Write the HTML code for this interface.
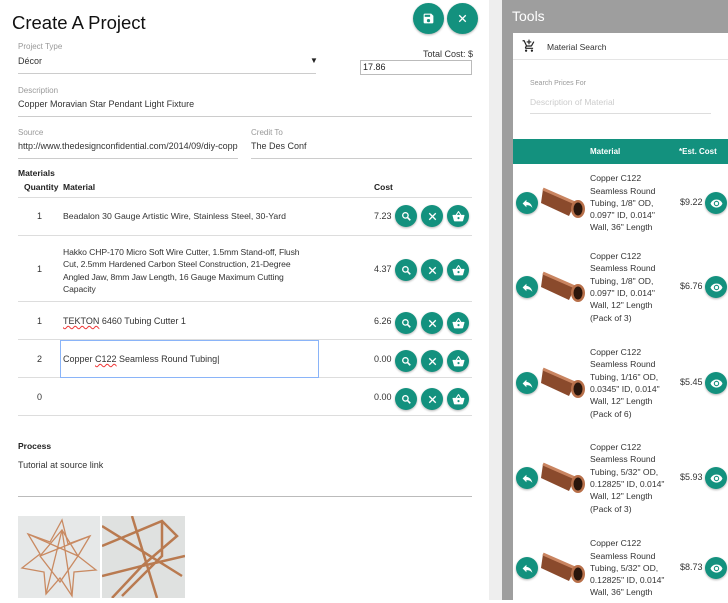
<!DOCTYPE html>
<html><head><meta charset="utf-8"><style>
*{margin:0;padding:0;box-sizing:border-box}
body{width:728px;height:600px;overflow:hidden;background:#fff;font-family:"Liberation Sans",sans-serif;color:#222;position:relative}
.a{position:absolute;white-space:nowrap}
.lbl{font-size:8px;color:#999}
.val{font-size:9px;color:#333}
.ln{position:absolute;height:1px;background:#ccc}
.c{position:absolute;width:22px;height:22px;border-radius:50%;background:#13917e;box-shadow:0 1px 2px rgba(0,0,0,.3);display:flex;align-items:center;justify-content:center}
.c svg{width:13px;height:13px}
.tube{position:absolute;width:46px;height:34px}
.rt{position:absolute;left:590px;font-size:8.6px;line-height:12.3px;color:#333;width:90px}
.pr{position:absolute;left:680px;font-size:9px;color:#333}
</style></head><body>
<!-- left -->
<div class="a" style="left:12px;top:12px;font-size:18.5px;color:#111">Create A Project</div>
<div class="c" style="left:413px;top:3px;width:31px;height:31px"><svg viewBox="0 0 24 24"><path fill="#fff" d="M17 3H5a2 2 0 0 0-2 2v14a2 2 0 0 0 2 2h14a2 2 0 0 0 2-2V7l-4-4zm-5 16a3 3 0 1 1 0-6 3 3 0 0 1 0 6zm3-10H5V5h10v4z"/></svg></div>
<div class="c" style="left:447px;top:3px;width:31px;height:31px"><svg viewBox="0 0 24 24"><path stroke="#fff" stroke-width="2.4" d="M6 6l12 12M18 6L6 18"/></svg></div>
<div class="a lbl" style="left:18px;top:42px">Project Type</div>
<div class="a val" style="left:18px;top:56px">Décor</div>
<div class="a" style="left:310px;top:56px;font-size:8px">▼</div>
<div class="ln" style="left:18px;top:73px;width:298px"></div>
<div class="a val" style="left:423px;top:49px">Total Cost: $</div>
<div style="position:absolute;left:360px;top:60px;width:112px;height:15px;border:1px solid #bbb;font-size:9px;padding:1px 2px">17.86</div>
<div class="a lbl" style="left:18px;top:86px">Description</div>
<div class="a val" style="left:18px;top:99px">Copper Moravian Star Pendant Light Fixture</div>
<div class="ln" style="left:18px;top:116px;width:454px"></div>
<div class="a lbl" style="left:18px;top:128px">Source</div>
<div class="a val" style="left:18px;top:141px;width:220px;overflow:hidden">http://www.thedesignconfidential.com/2014/09/diy-copper</div>
<div class="ln" style="left:18px;top:158px;width:220px"></div>
<div class="a lbl" style="left:251px;top:128px">Credit To</div>
<div class="a val" style="left:251px;top:141px">The Des Conf</div>
<div class="ln" style="left:251px;top:158px;width:221px"></div>
<div class="a" style="left:18px;top:168px;font-size:8.5px;font-weight:bold">Materials</div>
<div class="a" style="left:24px;top:182px;font-size:8.5px;font-weight:bold">Quantity</div>
<div class="a" style="left:63px;top:182px;font-size:8.5px;font-weight:bold">Material</div>
<div class="a" style="left:374px;top:182px;font-size:8.5px;font-weight:bold">Cost</div>
<div class="ln" style="left:18px;top:197px;width:454px;background:#ddd"></div>
<div class="ln" style="left:18px;top:235px;width:454px;background:#ddd"></div>
<div class="ln" style="left:18px;top:301px;width:454px;background:#ddd"></div>
<div class="ln" style="left:18px;top:339px;width:454px;background:#ddd"></div>
<div class="ln" style="left:18px;top:377px;width:454px;background:#ddd"></div>
<div class="ln" style="left:18px;top:415px;width:454px;background:#ddd"></div>
<div class="a val" style="left:37px;top:211px">1</div>
<div class="a val" style="left:63px;top:211px;font-size:8.7px">Beadalon 30 Gauge Artistic Wire, Stainless Steel, 30-Yard</div>
<div class="a val" style="left:37px;top:264px">1</div>
<div class="a val" style="left:63px;top:246px;line-height:12.3px;font-size:8.6px;letter-spacing:-0.1px">Hakko CHP-170 Micro Soft Wire Cutter, 1.5mm Stand-off, Flush<br>Cut, 2.5mm Hardened Carbon Steel Construction, 21-Degree<br>Angled Jaw, 8mm Jaw Length, 16 Gauge Maximum Cutting<br>Capacity</div>
<div class="a val" style="left:37px;top:316px">1</div>
<div class="a val" style="left:63px;top:316px"><span style="text-decoration:underline wavy #e33">TEKTON</span> 6460 Tubing Cutter 1</div>
<div class="a val" style="left:37px;top:354px">2</div>
<div style="position:absolute;left:60px;top:340px;width:259px;height:38px;border:1px solid #8ab4f8"></div>
<div class="a val" style="left:63px;top:354px">Copper <span style="text-decoration:underline wavy #e33">C122</span> Seamless Round Tubing|</div>
<div class="a val" style="left:37px;top:392px">0</div>
<div class="a val" style="left:374px;top:211px">7.23</div>
<div class="a val" style="left:374px;top:264px">4.37</div>
<div class="a val" style="left:374px;top:316px">6.26</div>
<div class="a val" style="left:374px;top:354px">0.00</div>
<div class="a val" style="left:374px;top:392px">0.00</div>
<div id="acts"></div>
<div class="a" style="left:18px;top:441px;font-size:8.5px;font-weight:bold">Process</div>
<div class="a val" style="left:18px;top:460px">Tutorial at source link</div>
<div class="ln" style="left:18px;top:496px;width:454px;background:#bbb"></div>
<div style="position:absolute;left:18px;top:516px;width:82px;height:82px;background:#e6e8e8">
<svg width="82" height="82" viewBox="0 0 82 82"><g stroke="#c98a62" stroke-width="1.3" fill="none"><polygon points="44,4 50,28 72,20 60,40 78,54 56,56 54,80 42,62 28,78 26,56 4,52 22,38 10,18 32,26"/><polygon points="44,14 60,40 42,66 22,40"/><path d="M10,18 L60,40 M72,20 L22,40 M28,78 L44,14 M54,80 L44,14"/></g></svg></div>
<div style="position:absolute;left:102px;top:516px;width:83px;height:82px;background:#dfe1e0">
<svg width="83" height="82" viewBox="0 0 83 82"><g stroke="#b97a50" stroke-width="2.5" fill="none"><path d="M0,30 L60,5 L75,20 L40,50 L0,60 M30,0 L55,82 M60,5 L60,40 L20,80 M0,10 L80,60 M10,82 L40,50 L83,40"/></g></svg></div>
<!-- divider -->
<div style="position:absolute;left:489px;top:0;width:13px;height:600px;background:#eeeeee"></div>
<div style="position:absolute;left:502px;top:0;width:226px;height:600px;background:#9e9e9e"></div>
<div class="a" style="left:512px;top:8px;font-size:14px;color:#fff">Tools</div>
<div style="position:absolute;left:513px;top:33px;width:215px;height:567px;background:#fff"></div>
<svg style="position:absolute;left:522px;top:39px" width="14" height="14" viewBox="0 0 24 24"><path fill="#222" d="M11 9h2V6h3V4h-3V1h-2v3H8v2h3v3zm-4 9a2 2 0 1 0 0 4 2 2 0 0 0 0-4zm10 0a2 2 0 1 0 0 4 2 2 0 0 0 0-4zM7.2 14.8L8.1 13h7.4a2 2 0 0 0 1.8-1l3.9-7-1.8-1-3.9 7H8.5L4.3 2H1v2h2l3.6 7.6L5.2 14A2 2 0 0 0 7 17h12v-2H7.4z"/></svg>
<div class="a" style="left:547px;top:42px;font-size:8.5px;color:#333">Material Search</div>
<div class="ln" style="left:513px;top:59px;width:215px;background:#e5e5e5"></div>
<div class="a" style="left:530px;top:80px;font-size:7px;color:#999">Search Prices For</div>
<div class="a" style="left:530px;top:97px;font-size:8.5px;color:#ccc">Description of Material</div>
<div class="ln" style="left:530px;top:113px;width:181px;background:#ddd"></div>
<div style="position:absolute;left:513px;top:139px;width:215px;height:25px;background:#13917e"></div>
<div class="a" style="left:590px;top:147px;font-size:8px;font-weight:bold;color:#fff">Material</div>
<div class="a" style="left:679px;top:147px;font-size:8px;font-weight:bold;color:#fff">*Est. Cost</div>
<div id="rows"></div>
<script>
var a='';
[213,267,320,358,396].forEach(function(y){
a+='<div class="c" style="left:395px;top:'+(y-8)+'px"><svg viewBox="0 0 24 24"><circle cx="10" cy="10" r="5" stroke="#fff" stroke-width="2.5" fill="none"/><path d="M14 14l5 5" stroke="#fff" stroke-width="3"/></svg></div>';
a+='<div class="c" style="left:421px;top:'+(y-8)+'px"><svg viewBox="0 0 24 24"><path stroke="#fff" stroke-width="2.5" d="M6 6l12 12M18 6L6 18"/></svg></div>';
a+='<div class="c" style="left:447px;top:'+(y-8)+'px"><svg viewBox="0 0 24 24"><path fill="#fff" d="M17.2 9l-4.4-6.6a1 1 0 0 0-1.6 0L6.8 9H2a1 1 0 0 0-1 1.3l2.5 9.3A2 2 0 0 0 5.5 21h13a2 2 0 0 0 2-1.4l2.5-9.3A1 1 0 0 0 22 9h-4.8zM9 9l3-4.4L15 9H9zm3 8a2 2 0 1 1 0-4 2 2 0 0 1 0 4z"/></svg></div>';
});
document.getElementById('acts').innerHTML=a;
var R=[[203,'Copper C122<br>Seamless Round<br>Tubing, 1/8" OD,<br>0.097" ID, 0.014"<br>Wall, 36" Length','$9.22'],
[287,'Copper C122<br>Seamless Round<br>Tubing, 1/8" OD,<br>0.097" ID, 0.014"<br>Wall, 12" Length<br>(Pack of 3)','$6.76'],
[383,'Copper C122<br>Seamless Round<br>Tubing, 1/16" OD,<br>0.0345" ID, 0.014"<br>Wall, 12" Length<br>(Pack of 6)','$5.45'],
[478,'Copper C122<br>Seamless Round<br>Tubing, 5/32" OD,<br>0.12825" ID, 0.014"<br>Wall, 12" Length<br>(Pack of 3)','$5.93'],
[568,'Copper C122<br>Seamless Round<br>Tubing, 5/32" OD,<br>0.12825" ID, 0.014"<br>Wall, 36" Length','$8.73']];
var h='';
R.forEach(function(r){var y=r[0],n=r[1].split('<br>').length;
h+='<div class="c" style="left:516px;top:'+(y-11)+'px"><svg viewBox="0 0 24 24"><path fill="#fff" d="M10 9V5l-7 7 7 7v-4.1c5 0 8.5 1.6 11 5.1-1-5-4-10-11-11z"/></svg></div>';
h+='<svg class="tube" style="left:541px;top:'+(y-18)+'px" viewBox="0 0 46 34"><path d="M2 4 L34 18 L28 31 L0 18 Z" fill="#8a4a2c"/><path d="M2 4 L34 18" stroke="#c98460" stroke-width="3"/><ellipse cx="37" cy="24" rx="7" ry="9" fill="#b8704a"/><ellipse cx="37" cy="24" rx="4.5" ry="6.5" fill="#2a160c"/></svg>';
h+='<div class="rt" style="top:'+(y-n*12.3/2)+'px">'+r[1]+'</div>';
h+='<div class="pr" style="top:'+(y-6)+'px">'+r[2]+'</div>';
h+='<div class="c" style="left:705px;top:'+(y-11)+'px"><svg viewBox="0 0 24 24"><path fill="#fff" d="M12 4.5C7 4.5 2.7 7.6 1 12c1.7 4.4 6 7.5 11 7.5s9.3-3.1 11-7.5c-1.7-4.4-6-7.5-11-7.5zM12 17a5 5 0 1 1 0-10 5 5 0 0 1 0 10zm0-8a3 3 0 1 0 0 6 3 3 0 0 0 0-6z"/></svg></div>';
});
document.getElementById('rows').innerHTML=h;
</script>
</body></html>
